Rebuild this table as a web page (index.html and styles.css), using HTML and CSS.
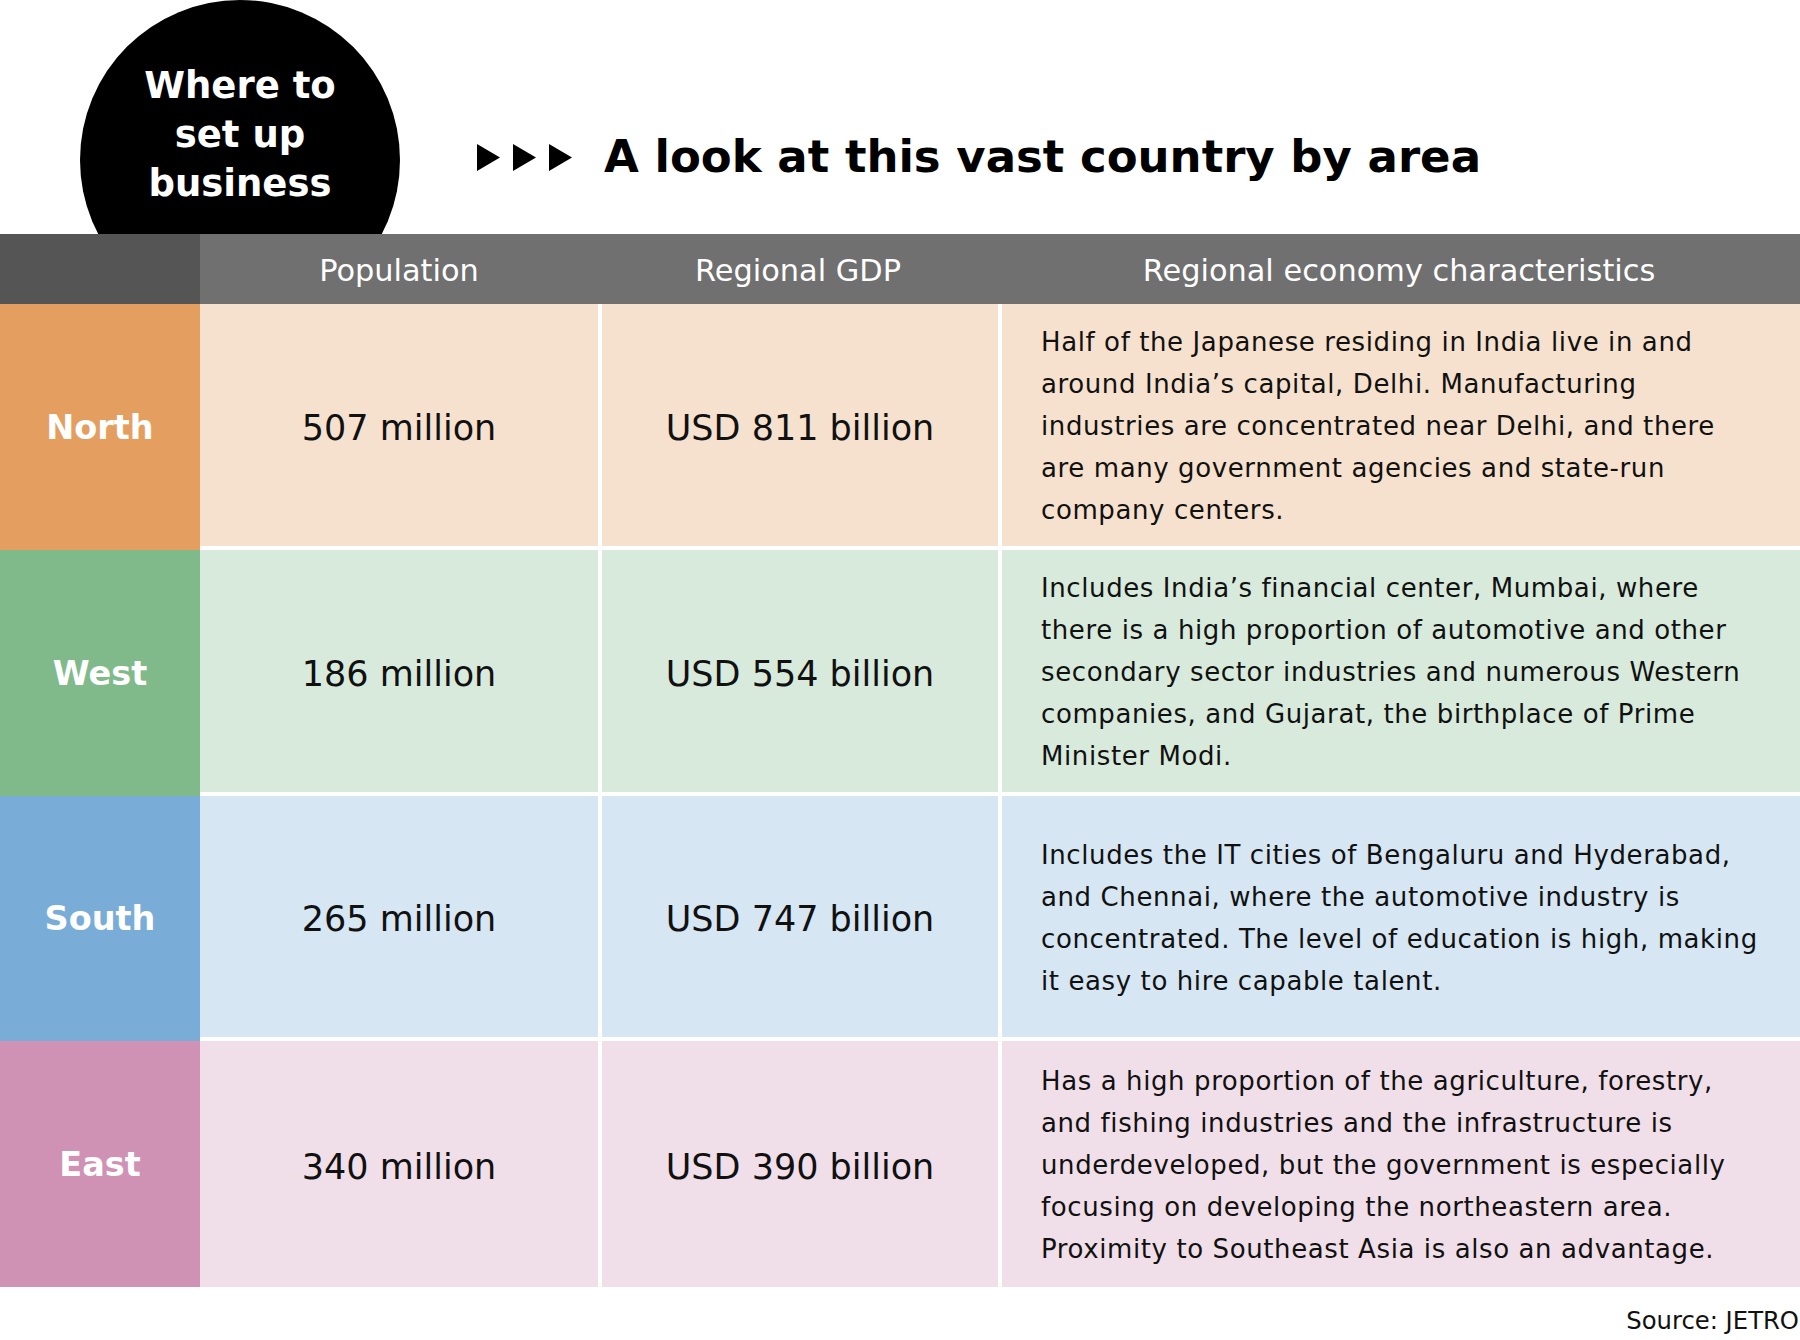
FILE: index.html
```html
<!DOCTYPE html>
<html lang="en">
<head>
<meta charset="utf-8">
<title>Where to set up business</title>
<link rel="stylesheet" href="styles.css">
</head>
<body>
<div class="page">
  <div class="top">
    <div class="badge">Where to<br>set up<br>business</div>
    <div class="title-row">
      <svg class="arrows" width="96" height="27" viewBox="0 0 96 27" aria-hidden="true">
        <polygon points="0,0 23,13.5 0,27" />
        <polygon points="36,0 59,13.5 36,27" />
        <polygon points="72,0 95,13.5 72,27" />
      </svg>
      <h1 class="title">A look at this vast country by area</h1>
    </div>
  </div>

  <div class="head">
    <div class="hcell hcell-blank"></div>
    <div class="hcell">Population</div>
    <div class="hcell">Regional GDP</div>
    <div class="hcell">Regional economy characteristics</div>
  </div>

  <div class="table">
    <div class="label north">North</div>
    <div class="cell num north-l">507 million</div>
    <div class="cell num sep north-l">USD 811 billion</div>
    <div class="cell desc sep north-l">Half of the Japanese residing in India live in and<br>around India’s capital, Delhi. Manufacturing<br>industries are concentrated near Delhi, and there<br>are many government agencies and state-run<br>company centers.</div>

    <div class="label west">West</div>
    <div class="cell num west-l">186 million</div>
    <div class="cell num sep west-l">USD 554 billion</div>
    <div class="cell desc sep west-l">Includes India’s financial center, Mumbai, where<br>there is a high proportion of automotive and other<br>secondary sector industries and numerous Western<br>companies, and Gujarat, the birthplace of Prime<br>Minister Modi.</div>

    <div class="label south">South</div>
    <div class="cell num south-l">265 million</div>
    <div class="cell num sep south-l">USD 747 billion</div>
    <div class="cell desc sep south-l">Includes the IT cities of Bengaluru and Hyderabad,<br>and Chennai, where the automotive industry is<br>concentrated. The level of education is high, making<br>it easy to hire capable talent.</div>

    <div class="label east">East</div>
    <div class="cell num last east-l">340 million</div>
    <div class="cell num sep last east-l">USD 390 billion</div>
    <div class="cell desc sep last east-l">Has a high proportion of the agriculture, forestry,<br>and fishing industries and the infrastructure is<br>underdeveloped, but the government is especially<br>focusing on developing the northeastern area.<br>Proximity to Southeast Asia is also an advantage.</div>
  </div>

  <div class="source">Source: JETRO</div>
</div>
</body>
</html>
```

FILE: styles.css
```css
* { box-sizing: border-box; }
html, body { margin: 0; padding: 0; background: #fff; }
body {
  font-family: "DejaVu Sans", Verdana, sans-serif;
  color: #111;
  width: 1800px;
  height: 1340px;
  overflow: hidden;
}
.page { width: 1800px; }

.top {
  height: 234px;
  display: flex;
  align-items: flex-start;
}
.badge {
  flex: 0 0 320px;
  width: 320px;
  height: 320px;
  margin-left: 80px;
  border-radius: 50%;
  background: #000;
  color: #fff;
  font-weight: bold;
  font-size: 37px;
  line-height: 49px;
  text-align: center;
  padding-top: 61px;
}
.title-row {
  display: flex;
  align-items: center;
  height: 54px;
  margin-top: 130px;
  margin-left: 77px;
}
.arrows { display: block; fill: #000; margin-right: 31px; }
.title {
  margin: 0;
  font-size: 45px;
  line-height: 54px;
  font-weight: bold;
  color: #000;
  white-space: nowrap;
}

.head {
  position: relative;
  z-index: 1;
  display: grid;
  grid-template-columns: 200px 398px 400px 802px;
  height: 70px;
  background: #707070;
}
.hcell {
  color: #fff;
  font-size: 30.4px;
  padding-top: 2px;
  display: flex;
  align-items: center;
  justify-content: center;
  white-space: nowrap;
}
.hcell-blank { background: #555555; }

.table {
  display: grid;
  grid-template-columns: 200px 398px 400px 802px;
  grid-template-rows: 246px 246px 245px 246px;
  background: #fff;
}
.label {
  color: #fff;
  font-weight: bold;
  font-size: 33.5px;
  display: flex;
  align-items: center;
  justify-content: center;
}
.cell {
  border-bottom: 4px solid #fff;
  padding-top: 5px;
  display: flex;
  align-items: center;
}
.cell.last { border-bottom: 0; }
.cell.sep { border-left: 4px solid #fff; }
.num {
  justify-content: center;
  font-size: 35px;
  white-space: nowrap;
}
.cell.desc {
  font-size: 26px;
  line-height: 42px;
  letter-spacing: 0.6px;
  padding-top: 2px;
  padding-left: 39px;
  padding-right: 4px;
  white-space: nowrap;
}

.north { background: #e49e5f; }
.north-l { background: #f6e1ce; }
.west { background: #80ba8b; }
.west-l { background: #d8eadc; }
.south { background: #79add7; }
.south-l { background: #d6e6f3; }
.east { background: #cf91b4; }
.east-l { background: #f0dfe8; }

.source {
  text-align: right;
  font-size: 24.3px;
  line-height: 26px;
  margin-top: 21px;
  padding-right: 1px;
  color: #111;
}
```
